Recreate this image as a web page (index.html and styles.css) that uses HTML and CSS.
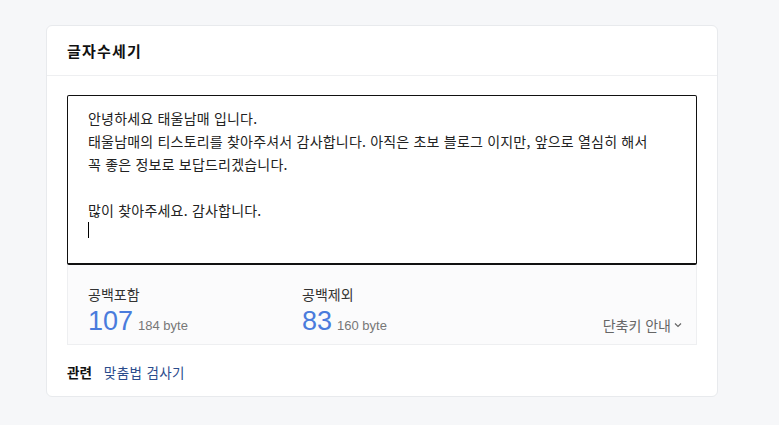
FILE: index.html
```html
<!DOCTYPE html>
<html lang="ko">
<head>
<meta charset="utf-8">
<link rel="stylesheet" href="styles.css">
</head>
<body>
<div class="card">
  <div class="card-head"><h2 class="title">글자수세기</h2></div>
  <div class="card-body">
    <div class="editor">
      <div class="line">안녕하세요 태울남매 입니다.</div>
      <div class="line">태울남매의 티스토리를 찾아주셔서 감사합니다. 아직은 초보 블로그 이지만, 앞으로 열심히 해서</div>
      <div class="line">꼭 좋은 정보로 보답드리겠습니다.</div>
      <div class="line">&nbsp;</div>
      <div class="line">많이 찾아주세요. 감사합니다.</div>
      <div class="line"><span class="caret"></span></div>
    </div>
    <div class="stats">
      <div class="stat">
        <div class="label">공백포함</div>
        <div class="value"><span class="num">107</span><span class="byte">184 byte</span></div>
      </div>
      <div class="stat">
        <div class="label">공백제외</div>
        <div class="value"><span class="num">83</span><span class="byte">160 byte</span></div>
      </div>
      <div class="shortcut">단축키 안내<svg class="chev" width="8" height="6" viewBox="0 0 8 6"><path d="M1 1.5 L4 4.5 L7 1.5" fill="none" stroke="#666" stroke-width="1.2"/></svg></div>
    </div>
    <div class="related">
      <span class="rel-label">관련</span>
      <a class="rel-link" href="#">맞춤법 검사기</a>
    </div>
  </div>
</div>
</body>
</html>
```
FILE: styles.css
```css
html, body {
  margin: 0;
  padding: 0;
}
body {
  background: #f6f7f9;
  font-family: "Noto Sans CJK KR", "Noto Sans", "Liberation Sans", sans-serif;
  color: #222;
  padding: 25px 0 0 46px;
  height: 425px;
  box-sizing: border-box;
}
.card {
  width: 672px;
  height: 372px;
  box-sizing: border-box;
  background: #fff;
  border: 1px solid #e8eaed;
  border-radius: 6px;
}
.card-head {
  height: 50px;
  box-sizing: border-box;
  border-bottom: 1px solid #eeeff1;
  display: flex;
  align-items: center;
  padding: 0 20px;
}
.title {
  margin: 0;
  font-size: 15px;
  font-weight: 700;
  color: #111;
  letter-spacing: 1.2px;
}
.card-body {
  padding: 19px 20px 0 20px;
}
.editor {
  height: 170px;
  box-sizing: border-box;
  border: 1px solid #111;
  border-bottom-width: 2px;
  border-radius: 2px;
  padding: 11px 20px 0 20px;
  font-size: 14px;
  letter-spacing: 0.2px;
  line-height: 23px;
  color: #222;
}
.line {
  height: 23px;
  white-space: nowrap;
}
.caret {
  display: block;
  width: 1px;
  height: 16px;
  background: #000;
}
.stats {
  height: 80px;
  box-sizing: border-box;
  background: #fbfbfc;
  border: 1px solid #eeeff1;
  border-top: none;
  display: flex;
  align-items: flex-end;
  padding: 0 14px 7px 20px;
}
.stat {
  width: 214px;
  display: flex;
  flex-direction: column;
}
.label {
  font-size: 14px;
  color: #333;
  line-height: 20px;
  margin-bottom: 1px;
}
.value {
  display: flex;
  align-items: baseline;
  font-family: "Liberation Sans", Arial, sans-serif;
}
.num {
  font-size: 27px;
  line-height: 32px;
  color: #4a7bdc;
}
.byte {
  font-size: 13px;
  color: #777;
  margin-left: 5px;
}
.shortcut {
  margin-left: auto;
  font-size: 14px;
  color: #666;
  line-height: 20px;
  display: flex;
  align-items: center;
  gap: 3px;
  margin-bottom: 2px;
}
.chev {
  display: block;
}
.related {
  height: 54px;
  display: flex;
  align-items: center;
  gap: 12px;
  font-size: 13.5px;
}
.rel-label {
  font-weight: 700;
  color: #111;
}
.rel-link {
  color: #2b4c8c;
  text-decoration: none;
  letter-spacing: 0.4px;
}
```
